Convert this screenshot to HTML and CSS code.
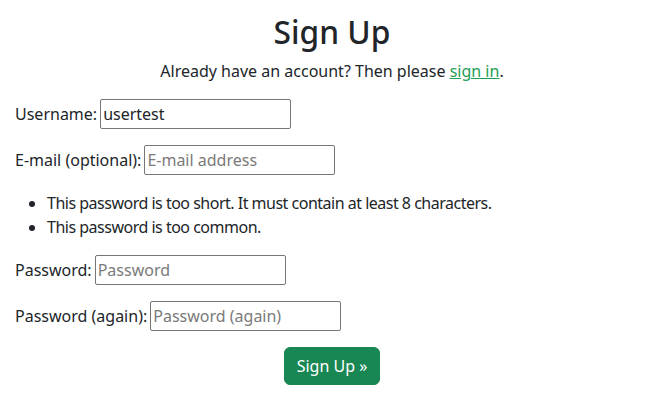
FILE: index.html
```html
<!DOCTYPE html>
<html lang="en">
<head>
<meta charset="utf-8">
<title>Sign Up</title>
<link rel="stylesheet" href="styles.css">
</head>
<body>
<main class="container">
  <h1 class="title">Sign Up</h1>
  <p class="intro">Already have an account? Then please <a href="#" class="link">sign in</a>.</p>
  <form class="signup-form">
    <p class="field"><label for="id_username">Username:</label><input id="id_username" class="text-input" type="text" value="usertest"></p>
    <p class="field"><label for="id_email">E-mail (optional):</label><input id="id_email" class="text-input" type="email" placeholder="E-mail address"></p>
    <ul class="errorlist">
      <li>This password is too short. It must contain at least 8 characters.</li>
      <li>This password is too common.</li>
    </ul>
    <p class="field"><label for="id_password1">Password:</label><input id="id_password1" class="text-input" type="password" placeholder="Password"></p>
    <p class="field"><label for="id_password2">Password (again):</label><input id="id_password2" class="text-input" type="password" placeholder="Password (again)"></p>
    <div class="actions"><button type="submit" class="btn-success">Sign Up &raquo;</button></div>
  </form>
</main>
</body>
</html>
```

FILE: styles.css
```css
* { box-sizing: border-box; }
html, body { margin: 0; padding: 0; }
body {
  font-family: "Noto Sans", "Open Sans", sans-serif;
  font-size: 16px;
  line-height: 1.5;
  color: #212529;
  background: #fff;
}
.container {
  padding: 13px 0 0 15px;
}
.title {
  margin: 0 0 8px 2px;
  font-size: 31.7px;
  font-weight: 500;
  line-height: 1.2;
  text-align: center;
}
.intro {
  margin: 0 0 16px 2px;
  text-align: center;
}
.link { color: #1f9d55; text-decoration: underline; }
.field {
  display: flex;
  align-items: center;
  gap: 3px;
  margin: 0 0 16px;
}
.text-input {
  width: 191px;
  height: 30px;
  padding: 1px 2px;
  border: 1px solid #767676;
  border-radius: 2px;
  font: inherit;
  color: #212529;
  background: #fff;
}
.text-input::placeholder { color: #7a7a7a; }
.errorlist {
  margin: 0 0 16px;
  padding-left: 32px;
  letter-spacing: -0.5px;
}
.actions {
  display: flex;
  justify-content: center;
  padding-left: 2px;
}
.btn-success {
  font: inherit;
  color: #fff;
  background: #198754;
  border: 1px solid #198754;
  border-radius: 6px;
  padding: 6px 12px;
  line-height: 1.5;
}
```
